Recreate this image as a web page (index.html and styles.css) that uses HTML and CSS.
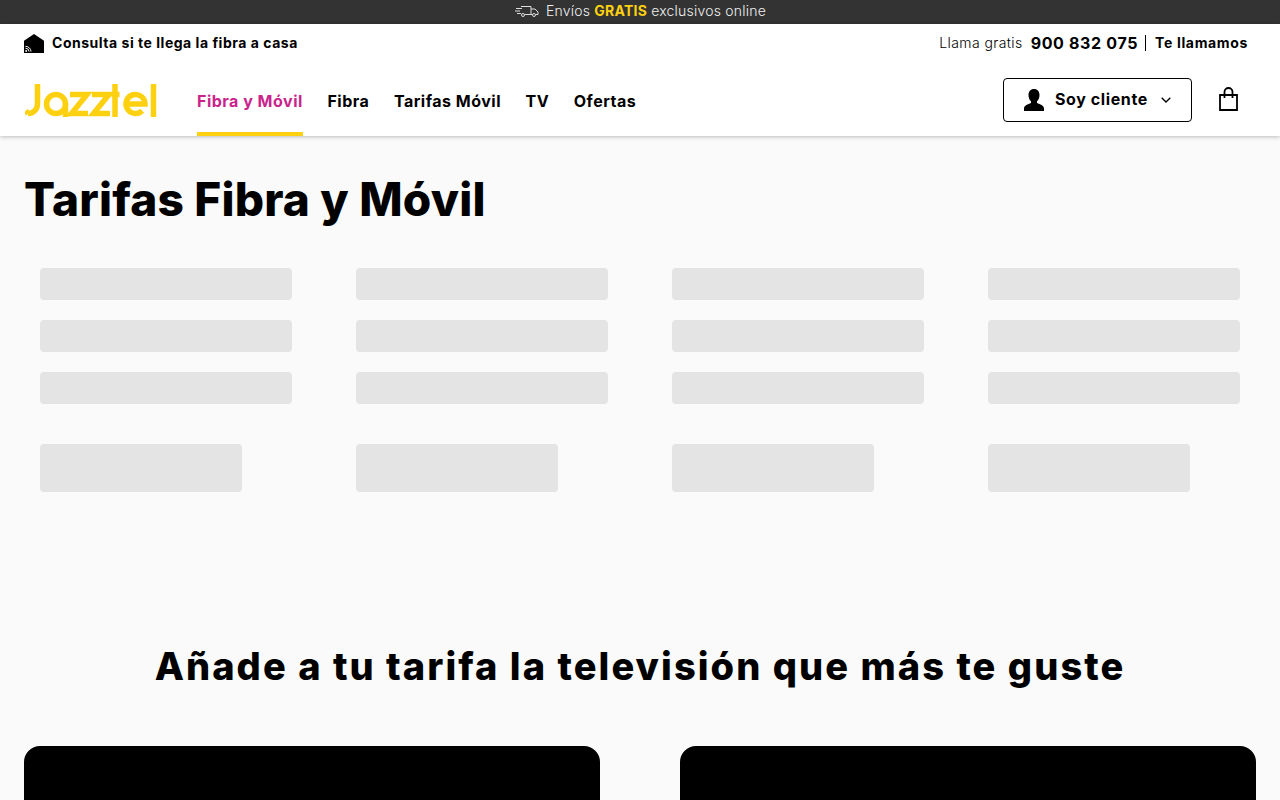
FILE: index.html
```html
<!DOCTYPE html>
<html lang="es">
<head>
<meta charset="utf-8">
<title>Tarifas Fibra y Móvil | Jazztel</title>
<link rel="stylesheet" href="styles.css">
</head>
<body>
<div class="promo">
  <svg class="truck" viewBox="0 0 24 12" width="24" height="12" fill="none" stroke="#ddd" stroke-width="1"><path d="M6 1.500h10v8h-6M16 4h4l3 3v2.500h-2M16 9.500h1M1 3.500h6M0 6h5M2 8.500h4"/><circle cx="8" cy="10" r="1.500"/><circle cx="19" cy="10" r="1.500"/></svg>
  <span class="promo-text">Envíos <b class="gratis">GRATIS</b> exclusivos online</span>
</div>
<header class="header">
  <div class="topbar">
    <a class="check">
      <svg class="home" viewBox="0 0 20 20" width="20" height="19" preserveAspectRatio="none"><path d="M10 0 20 7v13H0V7z" fill="#000"/><g fill="none" stroke="#fff" stroke-width="1"><path d="M1.500 13a5.500 5.500 0 0 1 5.500 5.500M1.500 15a3.500 3.500 0 0 1 3.500 3.500"/></g><circle cx="2.200" cy="17.800" r="1" fill="#fff"/></svg>
      <span>Consulta si te llega la fibra a casa</span>
    </a>
    <div class="contact">
      <span class="call">Llama gratis</span>
      <strong class="phone">900 832 075</strong>
      <span class="callback">Te llamamos</span>
    </div>
  </div>
  <div class="mainbar">
    <svg class="logo" viewBox="0 0 133 34" width="133" height="34" fill="none" stroke="#fdd010" stroke-width="5.500"><path d="M12.500 0v20a9.500 9.500 0 0 1-9.500 9.500M3 29.500 .5 27"/><circle cx="31" cy="20" r="9.500"/><path d="M40.500 19v14M45 10.500h17L46.500 29.500H63M67 10.500h17L68.500 29.500H85M90 0v33M86.500 10.500h8"/><path d="M99 20h21a9.500 9.500 0 1 0-2.800 6.700"/><path d="M128.500 0v33"/></svg>
    <nav class="nav">
      <a class="nav-link active">Fibra y Móvil</a>
      <a class="nav-link">Fibra</a>
      <a class="nav-link">Tarifas Móvil</a>
      <a class="nav-link">TV</a>
      <a class="nav-link">Ofertas</a>
    </nav>
    <button class="client">
      <svg viewBox="0 0 22 24" width="22" height="24"><path d="M11 1c3.500 0 5.500 2.600 5.500 6 0 2.600-1 5-2.500 6.300v1.700c3 1.200 7 2.300 7 5.500V23H1v-2.500c0-3.200 4-4.300 7-5.500v-1.700C6.500 12 5.500 9.600 5.500 7c0-3.400 2-6 5.500-6z" fill="#000"/></svg>
      <span class="client-label">Soy cliente</span>
      <svg viewBox="0 0 10 6" width="10" height="6" fill="none" stroke="#000" stroke-width="1.300"><path d="M.7.700 5 5 9.300.7"/></svg>
    </button>
    <svg class="bag" viewBox="0 0 19 24" width="19" height="24" fill="none" stroke="#000" stroke-width="1.800"><path d="M1 8h17v15H1zM5.500 11V5a4 4 0 0 1 8 0v6"/></svg>
  </div>
</header>
<main class="main">
  <h1 class="title">Tarifas Fibra y Móvil</h1>
  <div class="skeletons">
    <div class="sk-col"><div class="sk-line"></div><div class="sk-line"></div><div class="sk-line"></div><div class="sk-btn"></div></div>
    <div class="sk-col"><div class="sk-line"></div><div class="sk-line"></div><div class="sk-line"></div><div class="sk-btn"></div></div>
    <div class="sk-col"><div class="sk-line"></div><div class="sk-line"></div><div class="sk-line"></div><div class="sk-btn"></div></div>
    <div class="sk-col"><div class="sk-line"></div><div class="sk-line"></div><div class="sk-line"></div><div class="sk-btn"></div></div>
  </div>
  <h2 class="subtitle">Añade a tu tarifa la televisión que más te guste</h2>
  <div class="cards">
    <div class="card"></div>
    <div class="card"></div>
  </div>
</main>
</body>
</html>
```
FILE: styles.css
```css
* { box-sizing: border-box; }
html, body { margin: 0; height: 800px; overflow: hidden; }
body { background: #fafafa; color: #000; font-family: Inter, "Liberation Sans", sans-serif; }
.promo { height: 24px; background: #333; color: #f0f0f0; display: flex; align-items: center; justify-content: center; gap: 7px; font-size: 14px; font-weight: 300; padding: 0 0 2px 1px; }
.promo-text { letter-spacing: .22px; line-height: 18px; }
.gratis { color: #fdd010; font-weight: 700; }
.header { height: 112px; background: #fff; box-shadow: 0 1px 4px rgba(0,0,0,.25); position: relative; padding: 0 32px 0 24px; }
.topbar { height: 38px; display: flex; justify-content: space-between; align-items: center; padding-bottom: 1px; }
.check { display: flex; align-items: center; gap: 8px; font-size: 14px; font-weight: 700; letter-spacing: .52px; }
.home { margin-top: 1px; }
.contact { display: flex; align-items: center; font-size: 14px; }
.call { font-weight: 300; letter-spacing: .4px; }
.phone { font-size: 16px; font-weight: 700; margin-left: 8px; padding-right: 7px; border-right: 1px solid #000; letter-spacing: .66px; line-height: 16px; }
.callback { font-size: 14px; font-weight: 700; margin-left: 9px; letter-spacing: .65px; }
.mainbar { display: flex; align-items: center; height: 74px; position: relative; }
.logo { display: block; margin: 4px 0 0 1px; flex: none; }
.nav { display: flex; gap: 24.600px; margin-left: 39px; height: 74px; }
.nav-link { display: flex; align-items: center; font-size: 16px; font-weight: 700; letter-spacing: .5px; border-bottom: 4px solid transparent; padding-top: 8px; }
.nav-link.active { color: #c9248b; border-bottom-color: #fdd010; }
.client { margin-left: auto; width: 189px; height: 44px; background: #fff; border: 1px solid #000; border-radius: 4px; display: flex; align-items: center; padding: 0 0 0 19px; gap: 10px; font: 700 16px Inter, "Liberation Sans", sans-serif; letter-spacing: .6px; color: #000; margin-top: 2px; }
.client-label { margin-right: 3px; padding-bottom: 2px; }
.bag { margin: 0 10px 0 27px; }
.main { padding: 0 24px; }
.title { margin: 35px 0 0; font-size: 46px; line-height: 56px; font-weight: 800; letter-spacing: .2px; }
.skeletons { display: grid; grid-template-columns: repeat(4, 252px); gap: 64px; margin: 41px 0 0 16px; }
.sk-col { display: flex; flex-direction: column; gap: 20px; }
.sk-line { height: 32px; background: #e4e4e4; border-radius: 4px; }
.sk-btn { width: 202px; height: 48px; background: #e4e4e4; border-radius: 4px; margin-top: 20px; }
.subtitle { margin: 150px 0 0; text-align: center; font-size: 38px; line-height: 48px; font-weight: 800; letter-spacing: 2.060px; }
.cards { display: grid; grid-template-columns: 576px 576px; gap: 80px; margin-top: 56px; }
.card { height: 54px; background: #000; border-radius: 16px 16px 0 0; }
```
